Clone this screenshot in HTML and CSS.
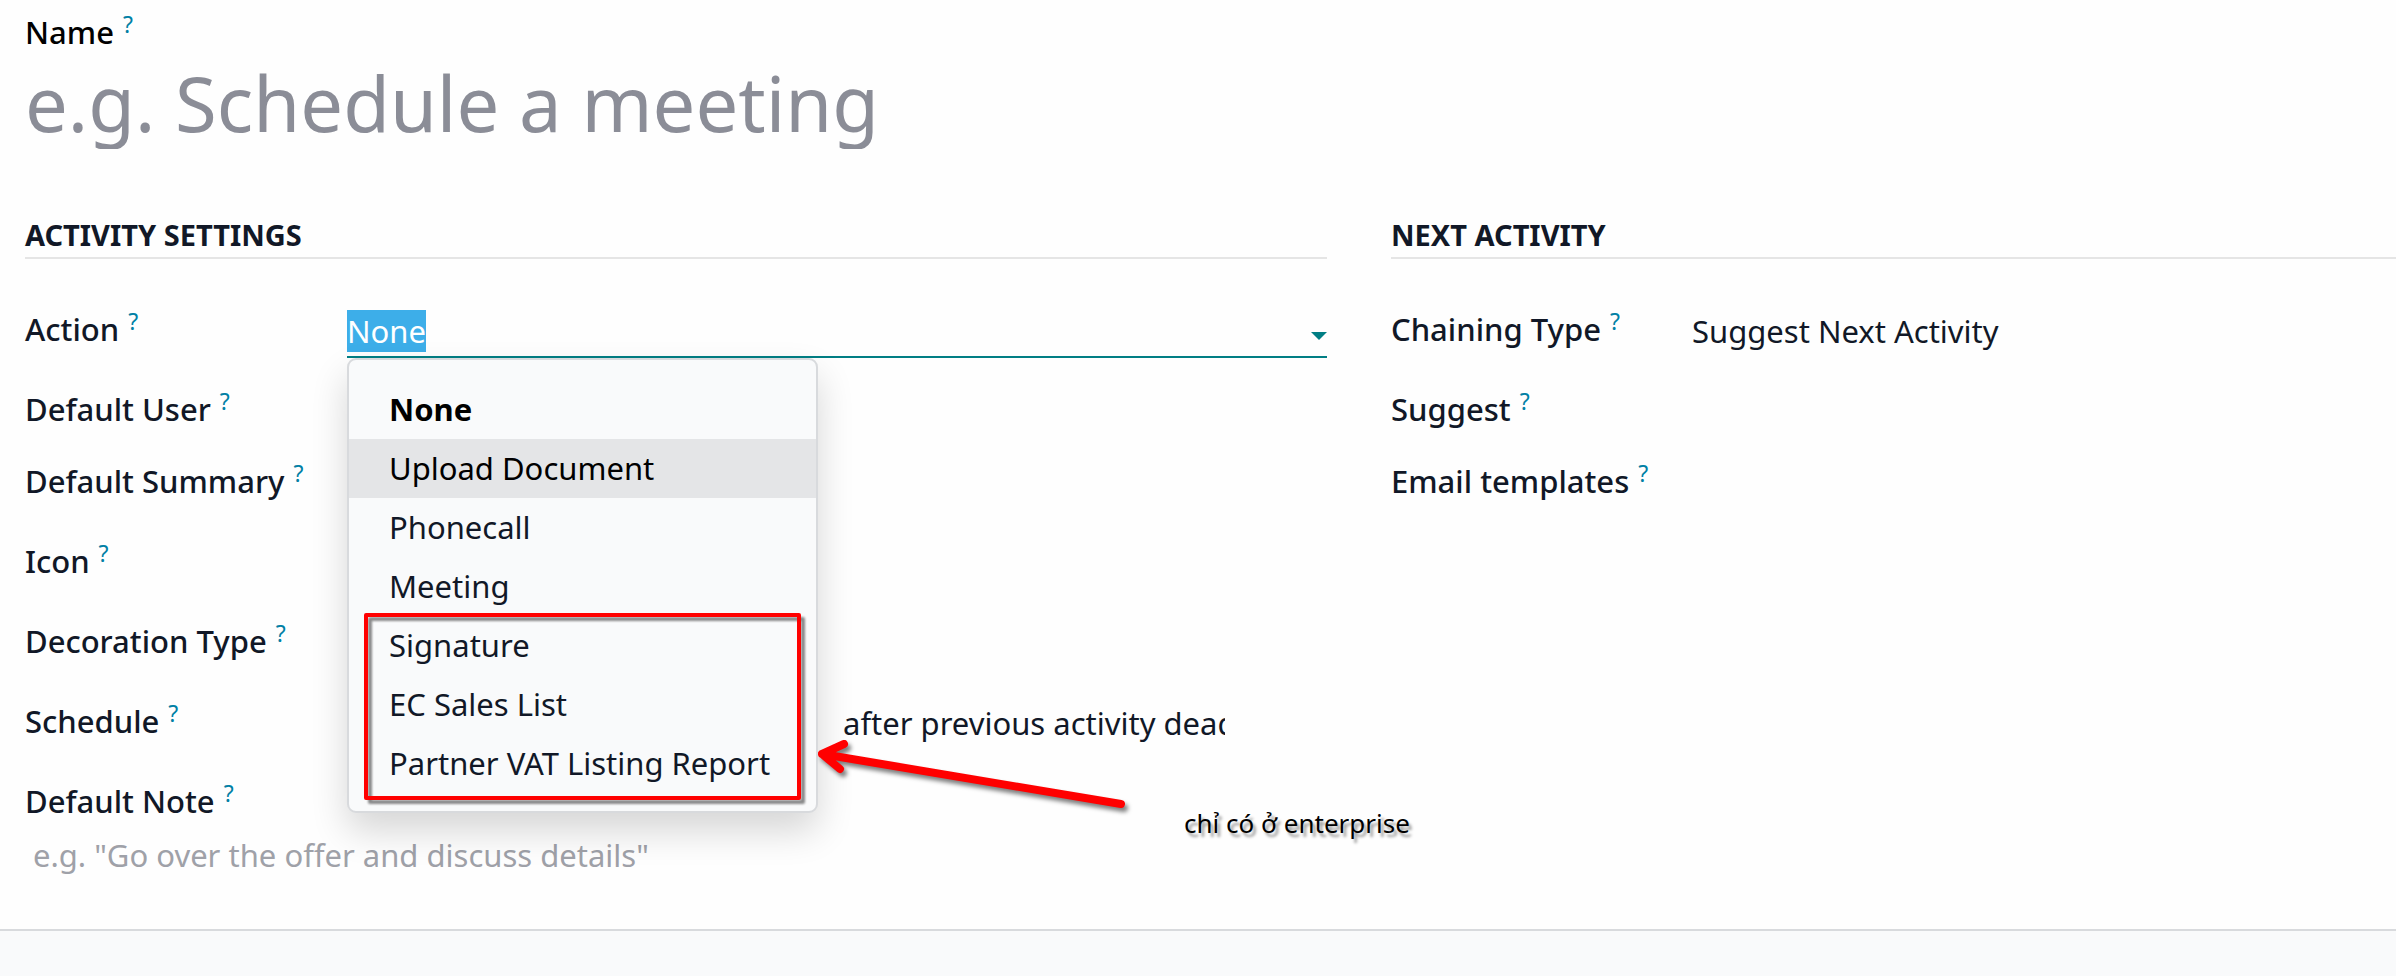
FILE: index.html
```html
<!DOCTYPE html>
<html lang="en">
<head>
<meta charset="utf-8">
<meta name="viewport" content="width=device-width, initial-scale=1">
<title>Activity Type</title>
<link rel="stylesheet" href="styles.css">
</head>
<body>
<form class="sheet">
  <div class="title">
    <label class="label label-name" for="name">Name<sup class="help">?</sup></label>
    <input class="title-input" id="name" type="text" placeholder="e.g. Schedule a meeting">
  </div>

  <div class="groups">
    <section class="group">
      <h2 class="group-title">Activity Settings</h2>
      <div class="row">
        <label class="label" for="action">Action<sup class="help">?</sup></label>
        <div class="combo">
          <input class="combo-input" id="action" type="text" value="None" role="combobox" aria-expanded="true" aria-controls="action-menu" autocomplete="off">
          <button class="combo-toggle" type="button" aria-label="Toggle options">
            <svg class="caret" viewBox="0 0 16 8" aria-hidden="true"><path d="M0 0h16L8 8z"/></svg>
          </button>
          <div class="dropdown">
            <ul class="menu" id="action-menu" role="listbox">
              <li class="option option-selected" role="option" aria-selected="true">None</li>
              <li class="option option-active" role="option">Upload Document</li>
              <li class="option" role="option">Phonecall</li>
              <li class="option" role="option">Meeting</li>
              <li class="option" role="option">Signature</li>
              <li class="option" role="option">EC Sales List</li>
              <li class="option" role="option">Partner VAT Listing Report</li>
            </ul>
            <div class="mark-box"></div>
            <svg class="mark-arrow" viewBox="0 0 330 90" aria-hidden="true">
              <path d="M314 67 15 17M37 7 15 17 33 32"/>
            </svg>
            <p class="mark-note">chỉ có ở enterprise</p>
          </div>
        </div>
      </div>
      <div class="row row-compact">
        <label class="label" for="user">Default User<sup class="help">?</sup></label>
        <input class="field" id="user" type="text">
      </div>
      <div class="row">
        <label class="label" for="summary">Default Summary<sup class="help">?</sup></label>
        <input class="field" id="summary" type="text">
      </div>
      <div class="row">
        <label class="label" for="icon">Icon<sup class="help">?</sup></label>
        <input class="field" id="icon" type="text">
      </div>
      <div class="row">
        <label class="label" for="decoration">Decoration Type<sup class="help">?</sup></label>
        <input class="field" id="decoration" type="text">
      </div>
      <div class="row">
        <label class="label" for="delay">Schedule<sup class="help">?</sup></label>
        <div class="schedule">
          <input class="field" id="delay" type="text">
          <select class="field" aria-label="Delay from">
            <option>after previous activity deadline</option>
          </select>
        </div>
      </div>
      <div class="note">
        <label class="label" for="note">Default Note<sup class="help">?</sup></label>
        <textarea class="note-input" id="note" rows="1" placeholder="e.g. &quot;Go over the offer and discuss details&quot;"></textarea>
      </div>
    </section>

    <section class="group group-next">
      <h2 class="group-title">Next Activity</h2>
      <div class="row">
        <label class="label" for="chaining">Chaining Type<sup class="help">?</sup></label>
        <select class="field" id="chaining"><option>Suggest Next Activity</option></select>
      </div>
      <div class="row row-compact">
        <label class="label" for="suggest">Suggest<sup class="help">?</sup></label>
        <input class="field" id="suggest" type="text">
      </div>
      <div class="row">
        <label class="label" for="templates">Email templates<sup class="help">?</sup></label>
        <input class="field" id="templates" type="text">
      </div>
    </section>
  </div>
</form>
<footer class="footer"></footer>
<script src="script.js"></script>
</body>
</html>
```
FILE: styles.css
```css
* {
  box-sizing: border-box;
}

body {
  display: flex;
  flex-direction: column;
  min-height: 100vh;
  margin: 0;
  overflow-x: hidden;
  background: #fefefe;
  color: #111827;
  font: 400 31px/44px "Noto Sans", sans-serif;
}

input,
select,
textarea,
button {
  min-width: 0;
  margin: 0;
  padding: 0;
  border: 0;
  border-radius: 0;
  outline: 0;
  background: transparent;
  color: inherit;
  font: inherit;
  appearance: none;
}

.sheet {
  padding: 10px 0 50px 25px;
}

.title {
  display: flex;
  flex-direction: column;
  margin-bottom: 62px;
}

.label {
  font-weight: 500;
  white-space: nowrap;
}

.label-name {
  color: #000;
}

.help {
  margin-left: 9px;
  color: #0180a5;
  font-size: 23px;
  font-weight: 400;
  line-height: 0;
}

.title-input {
  height: 92px;
  margin-top: 3px;
  font-size: 76px;
  line-height: 92px;
}

.title-input::placeholder {
  color: #8b8d97;
  opacity: 1;
}

.groups {
  display: grid;
  grid-template-columns: 1302fr 1005fr;
  gap: 64px;
}

.group {
  min-width: 0;
}

.group-title {
  margin: 0 0 48px;
  padding-top: 2px;
  border-bottom: 2px solid #e5e5e5;
  font-size: 29px;
  font-weight: 700;
  line-height: 44px;
  text-transform: uppercase;
}

.row {
  display: grid;
  grid-template-columns: 322px minmax(0, 1fr);
  align-items: start;
  height: 80px;
}

.row-compact {
  height: 72px;
}

.group-next .row {
  grid-template-columns: 301px minmax(0, 1fr);
}

.field {
  width: 100%;
  height: 48px;
  line-height: 48px;
}

.combo {
  position: relative;
  display: flex;
  height: 51px;
  border-bottom: 2px solid #017e84;
}

.combo-input {
  flex: 1;
  height: 48px;
}

.combo-input::selection {
  background: #3daee9;
  color: #fff;
}

.combo-toggle {
  display: flex;
  align-items: center;
  height: 58px;
}

.caret {
  width: 16px;
  height: 8px;
  fill: #017e84;
}

.dropdown {
  position: absolute;
  top: 51px;
  left: 0;
  z-index: 1;
}

.menu {
  width: 471px;
  margin: 0;
  padding: 20px 0 18px;
  border: 2px solid #d8dadd;
  border-radius: 9px;
  background: #f9fafb;
  box-shadow: 0 18px 36px rgba(0, 0, 0, 0.16);
  list-style: none;
}

.option {
  padding: 0 40px;
  line-height: 59px;
  white-space: nowrap;
}

.option-selected {
  color: #000;
  font-weight: 700;
}

.option-active {
  background: #e4e5e7;
  color: #000;
}

.mark-box {
  position: absolute;
  top: 255px;
  left: 17px;
  width: 437px;
  height: 187px;
  border: 4px solid #f00;
  border-radius: 2px;
  filter: drop-shadow(4px 4px 1px rgba(0, 0, 0, 0.45));
}

.mark-arrow {
  position: absolute;
  top: 379px;
  left: 460px;
  width: 330px;
  height: 90px;
  fill: none;
  stroke: #f00;
  stroke-width: 8px;
  stroke-linecap: round;
  stroke-linejoin: round;
  filter: drop-shadow(3px 4px 2px rgba(0, 0, 0, 0.5));
}

.mark-note {
  position: absolute;
  top: 443px;
  left: 837px;
  margin: 0;
  color: #000;
  font-size: 26px;
  white-space: nowrap;
  text-shadow: 3px 4px 3px rgba(0, 0, 0, 0.4);
}

.schedule {
  display: grid;
  grid-template-columns: 1fr 382px;
  gap: 16px;
  padding-right: 102px;
}

.note {
  display: flex;
  flex-direction: column;
  gap: 10px;
}

.note-input {
  height: 46px;
  padding-left: 8px;
  overflow: hidden;
  resize: none;
}

.note-input::placeholder {
  color: #9fa1a8;
  opacity: 1;
}

.footer {
  flex: 1;
  border-top: 2px solid #d8dadd;
  background: #f9fafb;
}
```
FILE: script.js
```js
const action = document.getElementById("action");
action.focus();
action.select();
```
